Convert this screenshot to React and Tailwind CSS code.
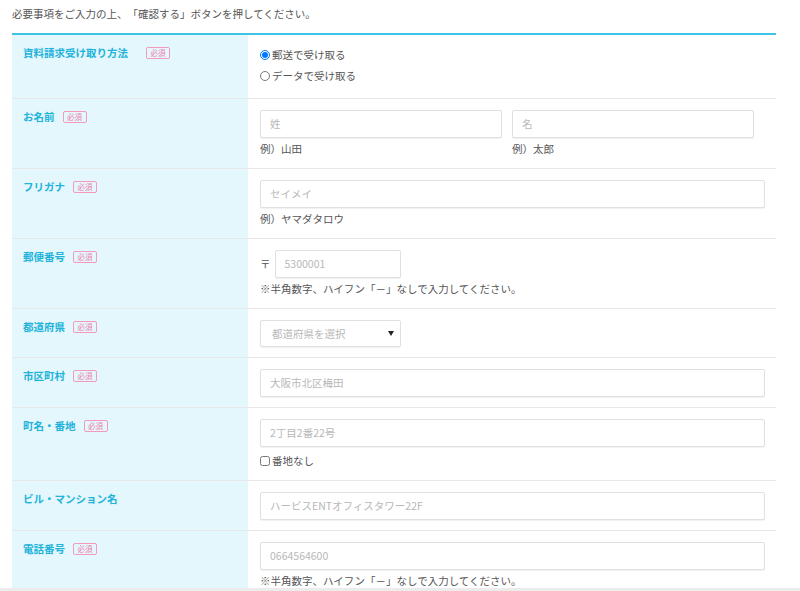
import React from "react";

const font = {
  fontFamily: '"Noto Sans CJK JP", "Noto Sans", sans-serif',
};

const Badge = ({ wide }) => (
  <span
    className={`inline-flex items-center justify-center h-[12px] w-[24px] border border-[#f39abb] rounded-[2px] text-[7.5px] leading-none text-[#f07fa8] font-normal ${
      wide ? "ml-[18px]" : "ml-[8px]"
    }`}
  >
    必須
  </span>
);

const Row = ({ label, required, wide, children, className = "pt-[11px] pb-[10px]" }) => (
  <div className="flex border-b border-[#e8e8e8]">
    <div className="w-[236px] shrink-0 bg-[#e4f7fd] pt-[11px] px-[11px]">
      <div className="flex items-center text-[10.5px] leading-[14px] font-bold text-[#22b3da]">
        <span>{label}</span>
        {required && <Badge wide={wide} />}
      </div>
    </div>
    <div className={`flex-1 pl-[12px] ${className}`}>{children}</div>
  </div>
);

const Input = ({ placeholder, w = "w-[505px]" }) => (
  <div
    className={`${w} h-[28px] flex items-center px-[9px] border border-[#e0e0e0] rounded-[2px] bg-white shadow-[0_1px_1px_rgba(0,0,0,0.06)] text-[10.5px] text-[#b8b8b8]`}
  >
    {placeholder}
  </div>
);

const Note = ({ children }) => (
  <p className="mt-[2px] leading-[18px] text-[10.5px] text-[#555]">{children}</p>
);

export default function App() {
  return (
    <div
      className="h-[591px] overflow-hidden flex flex-col bg-white [text-spacing-trim:space-all]"
      style={font}
    >
      <div className="flex-1 overflow-hidden px-[12px]">
        <p className="h-[33px] pt-[6px] text-[10.5px] leading-[16px] text-[#555]">
          必要事項をご入力の上、「確認する」ボタンを押してください。
        </p>
        <div className="w-[764px] border-t-2 border-[#3fc2e4]">
          <Row
            label="資料請求受け取り方法"
            required
            wide
            className="pt-[11px] pb-[13px]"
          >
            <div className="flex flex-col gap-[3px] text-[10.5px] text-[#555]">
              <label className="h-[18px] flex items-center gap-[2px]">
                <input
                  type="radio"
                  name="method"
                  defaultChecked
                  className="m-0 w-[10px] h-[10px]"
                />
                郵送で受け取る
              </label>
              <label className="h-[18px] flex items-center gap-[2px]">
                <input type="radio" name="method" className="m-0 w-[10px] h-[10px]" />
                データで受け取る
              </label>
            </div>
          </Row>

          <Row label="お名前" required>
            <div className="flex gap-[10px]">
              <div>
                <Input placeholder="姓" w="w-[242px]" />
                <Note>例）山田</Note>
              </div>
              <div>
                <Input placeholder="名" w="w-[242px]" />
                <Note>例）太郎</Note>
              </div>
            </div>
          </Row>

          <Row label="フリガナ" required>
            <Input placeholder="セイメイ" />
            <Note>例）ヤマダタロウ</Note>
          </Row>

          <Row label="郵便番号" required>
            <div className="flex items-center text-[10.5px] text-[#555]">
              <span className="mr-[4px]">〒</span>
              <Input placeholder="5300001" w="w-[126px]" />
            </div>
            <Note>※半角数字、ハイフン「－」なしで入力してください。</Note>
          </Row>

          <Row label="都道府県" required className="pt-[11px] pb-[10px]">
            <div className="w-[141px] h-[27px] flex items-center justify-between pl-[11px] pr-[6px] border border-[#e0e0e0] rounded-[2px] bg-white shadow-[0_1px_1px_rgba(0,0,0,0.06)] text-[10.5px] text-[#b8b8b8]">
              <span>都道府県を選択</span>
              <svg width="6" height="5" viewBox="0 0 6 5">
                <path d="M0 0h6L3 5z" fill="#222" />
              </svg>
            </div>
          </Row>

          <Row label="市区町村" required>
            <Input placeholder="大阪市北区梅田" />
          </Row>

          <Row label="町名・番地" required>
            <Input placeholder="2丁目2番22号" />
            <label className="mt-[5px] h-[18px] flex items-center gap-[2px] text-[10.5px] text-[#555]">
              <input type="checkbox" className="m-0 w-[10px] h-[10px]" />
              番地なし
            </label>
          </Row>

          <Row label="ビル・マンション名">
            <Input placeholder="ハービスENTオフィスタワー22F" />
          </Row>

          <Row label="電話番号" required>
            <Input placeholder="0664564600" />
            <Note>※半角数字、ハイフン「－」なしで入力してください。</Note>
          </Row>
        </div>
      </div>
      <div className="h-[3px] bg-[#ececec]" />
    </div>
  );
}
